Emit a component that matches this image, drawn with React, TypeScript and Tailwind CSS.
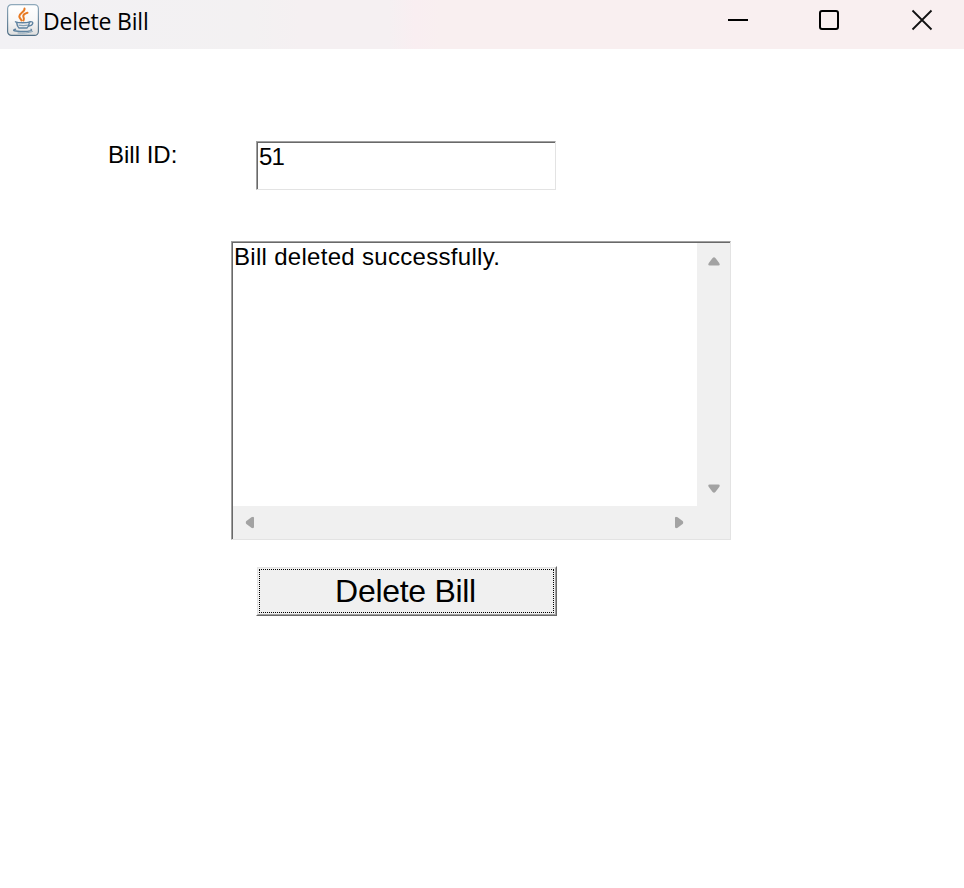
function JavaIcon() {
  return (
    <svg width="34" height="34" viewBox="0 0 34 34" fill="none" className="ml-[6px] mt-[3px] shrink-0">
      <defs>
        <linearGradient id="tile" x1="0" y1="0" x2="0" y2="1">
          <stop offset="0" stopColor="#ffffff" />
          <stop offset="0.5" stopColor="#f8f8f8" />
          <stop offset="1" stopColor="#dedede" />
        </linearGradient>
        <linearGradient id="edge" x1="0" y1="0" x2="0" y2="1">
          <stop offset="0" stopColor="#8fa9bb" />
          <stop offset="1" stopColor="#506f87" />
        </linearGradient>
      </defs>
      <rect x="1.6" y="1.6" width="30.8" height="30.8" rx="4" fill="url(#tile)" stroke="url(#edge)" strokeWidth="1.2" />
      <path d="M18.500 5.500c.8 3.200-5 4.500-5.200 7.700-.1 1.600 1.700 2.600 2.200 4.300M21.500 9.800c-2.500.8-4.600 2-4.200 3.700.3 1.200 1.300 2.200.2 4" stroke="#e87a22" strokeWidth="2" strokeLinecap="round" />
      <path d="M9.500 18.900c3 1.200 11 1.200 14.500 0M10.800 20.300c.2 2 .9 3.700 2.200 4.700h8c1.400-1 2-2.700 2.200-4.700" stroke="#5f83a0" strokeWidth="1.500" strokeLinecap="round" />
      <path d="M12.500 22.200c3 .6 6.500.6 9.500 0" stroke="#86a1b5" strokeWidth="1.200" />
      <path d="M24 18.700c4.400-.7 3.300 3.900-1.200 4.300" stroke="#5f83a0" strokeWidth="1.400" strokeLinecap="round" />
      <path d="M9.500 26.300c-4.200.9-1 2.200 7.500 2.200 6.500 0 10-.8 8-2.200" stroke="#5f83a0" strokeWidth="1.400" strokeLinecap="round" />
      <path d="M12 30c5 .4 11 0 14.500-1.500" stroke="#8aa5b8" strokeWidth="1" strokeLinecap="round" />
    </svg>
  );
}

function Arrow({ className }: { className: string }) {
  return (
    <svg width="12" height="9" viewBox="0 0 12 9" className={className}>
      <path d="M4.600.9Q6-.6 7.400.9L11.200 5.900Q12.600 8.500 10.300 8.500H1.700Q-.6 8.500.8 5.900Z" fill="#a3a3a3" />
    </svg>
  );
}

export default function App() {
  return (
    <div className="flex h-[888px] w-[964px] flex-col overflow-hidden bg-white font-['Liberation_Sans',Arial,sans-serif] text-[24px] leading-[28px] text-black">
      <header className="flex h-[49px] shrink-0 bg-[linear-gradient(to_right,#f2f1f4_0,#f3f1f2_250px,#f5f0f2_300px,#f5f0f2_390px,#f9eef1_415px,#f9eff0_440px)]">
        <JavaIcon />
        <span className="ml-[3px] mt-[5px] whitespace-nowrap font-['Open_Sans','Noto_Sans',sans-serif] text-[23px] leading-[32px] tracking-[-0.2px]">Delete Bill</span>
        <div className="ml-auto mr-[31px] mt-[9px] flex">
          <svg width="22" height="22" viewBox="0 0 22 22" fill="none" stroke="#000">
            <path d="M1 11h20" strokeWidth="2" />
          </svg>
          <svg width="22" height="22" viewBox="0 0 22 22" fill="none" stroke="#000" className="ml-[69px]">
            <rect x="2" y="2" width="18" height="18" rx="2" strokeWidth="2" />
          </svg>
          <svg width="22" height="22" viewBox="0 0 22 22" fill="none" stroke="#111" className="ml-[71px]">
            <path d="M1.500 1.500l19 19M20.500 1.500l-19 19" strokeWidth="1.800" />
          </svg>
        </div>
      </header>

      <main className="flex flex-col">
        <div className="mt-[92px] flex h-[49px]">
          <label className="ml-[108px] w-[148px]">Bill ID:</label>
          <div className="h-[49px] w-[300px] border border-b-[#e3e3e3] border-l-[#a0a0a0] border-r-[#e3e3e3] border-t-[#a0a0a0]">
            <div className="h-full border-l border-t border-[#696969] pl-px tracking-[-0.8px]">51</div>
          </div>
        </div>

        <div className="ml-[231px] mt-[51px] h-[299px] w-[500px] border border-b-[#e3e3e3] border-l-[#a0a0a0] border-r-[#e3e3e3] border-t-[#a0a0a0]">
          <div className="grid h-full grid-cols-[464px_33px] grid-rows-[263px_33px] border-l border-t border-[#696969] bg-[#f0f0f0]">
            <div className="whitespace-nowrap bg-white pl-px tracking-[0.3px]">Bill deleted successfully.</div>
            <div className="flex flex-col items-center justify-between pb-[13px] pt-[14px]">
              <Arrow className="" />
              <Arrow className="rotate-180" />
            </div>
            <div className="flex items-center justify-between pl-[11px] pr-[12px]">
              <Arrow className="-rotate-90" />
              <Arrow className="rotate-90" />
            </div>
          </div>
        </div>

        <button className="ml-[256px] mt-[26px] h-[50px] w-[301px] border border-b-[#696969] border-l-white border-r-[#696969] border-t-white text-[32px] leading-[42px] tracking-[-0.3px]">
          <span className="block h-full border border-b-[#a0a0a0] border-l-[#e3e3e3] border-r-[#a0a0a0] border-t-[#e3e3e3] bg-[#f0f0f0] p-px">
            <span className="block h-full border border-dotted border-black pr-[2px]">Delete Bill</span>
          </span>
        </button>
      </main>
    </div>
  );
}
